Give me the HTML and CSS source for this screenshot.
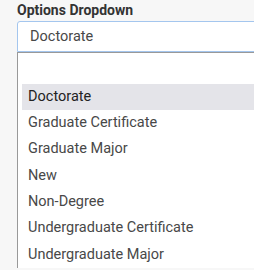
FILE: index.html
```html
<!DOCTYPE html>
<html lang="en">
<head>
    <meta charset="UTF-8">
    <meta name="viewport" content="width=device-width, initial-scale=1.0">
    <title>Options Dropdown</title>
    <link rel="stylesheet" href="styles.css">
</head>
<body>
    <div class="field">
        <label class="field-label">Options Dropdown</label>
        <div class="select-box">Doctorate</div>
        <ul class="dropdown">
            <li class="option option-blank"></li>
            <li class="option active">Doctorate</li>
            <li class="option">Graduate Certificate</li>
            <li class="option">Graduate Major</li>
            <li class="option">New</li>
            <li class="option">Non-Degree</li>
            <li class="option">Undergraduate Certificate</li>
            <li class="option">Undergraduate Major</li>
        </ul>
    </div>
</body>
</html>
```

FILE: styles.css
```css
:root {
    --page-bg: #f7f7f7;
    --text-dark: #333;
    --text-item: #484848;
    --focus-border: #a4c6ee;
    --menu-border: #999;
    --active-bg: #e4e4e9;
}

body {
    font-family: Roboto, "Liberation Sans", sans-serif;
    background-color: var(--page-bg);
    margin: 0;
    overflow: hidden;
}

.field {
    width: 320px;
    padding: 1px 0 0 17px;
}

.field-label {
    display: block;
    font-size: 14px;
    font-weight: bold;
    line-height: 18px;
    color: var(--text-dark);
    margin-bottom: 2px;
}

.select-box {
    height: 29px;
    line-height: 29px;
    padding-left: 12px;
    background-color: #fff;
    border: 1px solid var(--focus-border);
    border-radius: 3px 3px 0 0;
    font-size: 14.5px;
    color: var(--text-item);
}

.dropdown {
    list-style: none;
    margin: 0;
    padding: 0 0 0 4px;
    background-color: #fff;
    border-top: 1px solid var(--menu-border);
    border-left: 1px solid var(--menu-border);
}

.option {
    height: 26.4px;
    line-height: 26.4px;
    padding-left: 6px;
    font-size: 14.5px;
    color: var(--text-item);
}

.option-blank {
    height: 30.5px;
}

.option.active {
    background-color: var(--active-bg);
    color: #222;
}
```
